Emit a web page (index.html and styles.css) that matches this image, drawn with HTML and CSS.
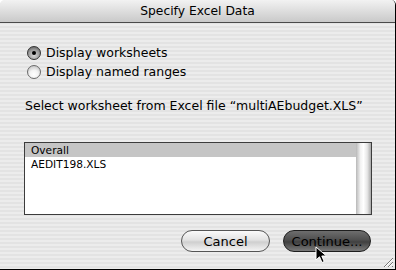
FILE: index.html
```html
<!DOCTYPE html>
<html lang="en">
<head>
    <meta charset="UTF-8">
    <title>Specify Excel Data</title>
    <link rel="stylesheet" href="styles.css">
</head>
<body>
    <div class="window">
        <div class="titlebar">Specify Excel Data</div>
        <div class="content">
            <div class="radios">
                <label class="radio-row"><span class="radio checked"></span>Display worksheets</label>
                <label class="radio-row"><span class="radio"></span>Display named ranges</label>
            </div>
            <p class="prompt">Select worksheet from Excel file “multiAEbudget.XLS”</p>
            <div class="listbox">
                <ul class="items">
                    <li class="selected">Overall</li>
                    <li>AEDIT198.XLS</li>
                </ul>
                <div class="scrollbar"></div>
            </div>
            <div class="buttons">
                <button class="btn">Cancel</button>
                <button class="btn default">Continue...</button>
            </div>
        </div>

        <!-- mouse pointer over the default button -->
        <svg class="cursor" width="14" height="18" viewBox="0 0 14 18">
            <path d="M1 1 L1 14 L4.5 10.8 L7 16.5 L9.2 15.5 L6.8 10 L11.5 10 Z" fill="#000" stroke="#fff" stroke-width="1"/>
        </svg>

        <!-- resize grip -->
        <svg class="grip" width="13" height="13" viewBox="0 0 13 13">
            <path d="M3 12 L12 3 M7 12 L12 7 M11 12 L12 11" stroke="#777" stroke-width="1"/>
            <path d="M4 12 L12 4 M8 12 L12 8" stroke="#fff" stroke-width="1"/>
        </svg>
    </div>
</body>
</html>
```

FILE: styles.css
```css
body {
    margin: 0;
    font-family: "DejaVu Sans", sans-serif;
    font-size: 12px;
    color: #000;
}

.window {
    position: relative;
    width: 396px;
    height: 270px;
    box-sizing: border-box;
    border-right: 1px solid #000;
    border-bottom: 1px solid #000;
    border-radius: 5px 5px 0 0;
    overflow: hidden;
    background: repeating-linear-gradient(#ececec 0 2px, #e3e3e3 2px 4px);
}

.titlebar {
    height: 22px;
    line-height: 23px;
    text-align: center;
    font-size: 12.3px;
    background: linear-gradient(#f2f2f2, #c9c9c9);
    border-bottom: 1px solid #4a4a4a;
}

.content {
    padding: 20px 24px 0 24px;
}

.radio-row {
    display: flex;
    align-items: center;
    height: 19px;
    padding-left: 3px;
    font-size: 12.5px;
}

.radio {
    width: 12px;
    height: 12px;
    margin-right: 5px;
    border: 1px solid #6a6a6a;
    border-radius: 50%;
    background: radial-gradient(circle at 50% 70%, #ffffff 0, #f3f3f3 40%, #b5b5b5 100%);
    box-sizing: content-box;
    position: relative;
}

.radio.checked {
    border-color: #333;
    background: radial-gradient(circle at 50% 70%, #d8d8d8 0, #9a9a9a 55%, #4d4d4d 100%);
}

.radio.checked::after {
    content: "";
    position: absolute;
    left: 4px;
    top: 4px;
    width: 4px;
    height: 4px;
    border-radius: 50%;
    background: #000;
}

.prompt {
    margin: 17px 0 0 1px;
    height: 16px;
    line-height: 16px;
    font-size: 12.5px;
    white-space: nowrap;
}

.listbox {
    display: flex;
    margin-top: 28px;
    width: 348px;
    height: 73px;
    box-sizing: border-box;
    border: 1px solid #3c3c3c;
    background: #fff;
}

.items {
    flex: 1;
    margin: 0;
    padding: 0;
    list-style: none;
}

.items li {
    height: 14px;
    line-height: 14px;
    padding-left: 6px;
    font-size: 10.6px;
}

.items li.selected {
    background: #c5c5c5;
}

.scrollbar {
    width: 15px;
    background: linear-gradient(90deg, #b8b8b8 0, #f2f2f2 30%, #ffffff 50%, #e6e6e6 75%, #a9a9a9 100%);
}

.buttons {
    display: flex;
    justify-content: flex-end;
    gap: 13px;
    margin-top: 15px;
    width: 347px;
}

.btn {
    height: 22px;
    padding: 0;
    font-family: "DejaVu Sans", sans-serif;
    font-size: 13px;
    color: #000;
    border: 1px solid #555;
    border-radius: 11px;
    background: linear-gradient(#fafafa 0, #e2e2e2 45%, #cfcfcf 55%, #f4f4f4 100%);
    width: 89px;
}

.btn.default {
    width: 88px;
    border-color: #1e1e1e;
    background: linear-gradient(#6e6e6e 0, #4e4e4e 45%, #404040 55%, #7a7a7a 100%);
    color: #000;
}

.cursor {
    position: absolute;
    left: 315px;
    top: 246px;
}

.grip {
    position: absolute;
    right: 1px;
    bottom: 1px;
}
```
